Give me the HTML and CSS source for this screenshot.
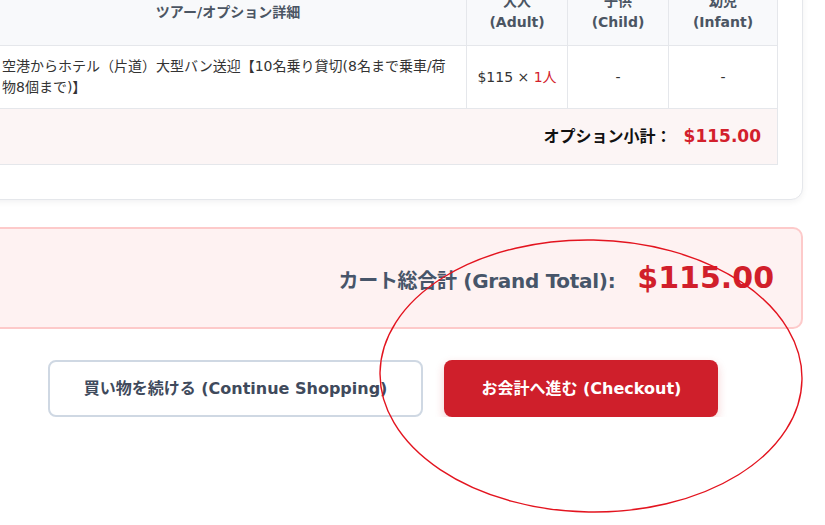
FILE: index.html
```html
<!DOCTYPE html>
<html lang="ja">
<head>
<meta charset="utf-8">
<title>カート</title>
<link rel="stylesheet" href="styles.css">
</head>
<body>
<main class="page">
  <section class="card">
    <table class="cart-table">
      <colgroup>
        <col class="col-detail">
        <col class="col-adult">
        <col class="col-child">
        <col class="col-infant">
      </colgroup>
      <thead>
        <tr>
          <th>ツアー/オプション詳細</th>
          <th>大人<br>(Adult)</th>
          <th>子供<br>(Child)</th>
          <th>幼児<br>(Infant)</th>
        </tr>
      </thead>
      <tbody>
        <tr>
          <td class="detail">空港からホテル（片道）大型バン送迎【10名乗り貸切(8名まで乗車/荷物8個まで)】</td>
          <td class="qty">$115 × <span class="count">1人</span></td>
          <td class="qty">-</td>
          <td class="qty">-</td>
        </tr>
        <tr class="subtotal-row">
          <td colspan="4"><span class="subtotal-label">オプション小計：</span><span class="subtotal-price">$115.00</span></td>
        </tr>
      </tbody>
    </table>
  </section>

  <section class="grand-total">
    <span class="grand-label">カート総合計 (Grand Total):</span>
    <span class="grand-price">$115.00</span>
  </section>

  <div class="actions">
    <button class="btn btn-secondary" type="button">買い物を続ける (Continue Shopping)</button>
    <button class="btn btn-primary" type="button">お会計へ進む (Checkout)</button>
  </div>
</main>

<svg class="annotation" width="825" height="525" viewBox="0 0 825 525" aria-hidden="true">
  <ellipse cx="591" cy="376" rx="211" ry="136" fill="none" stroke="#e3141f" stroke-width="1.4" transform="rotate(1 591 376)"/>
</svg>
</body>
</html>
```

FILE: styles.css
```css
html, body {
  margin: 0;
  padding: 0;
  background: #ffffff;
}

body {
  font-family: "DejaVu Sans", "Noto Sans CJK JP", sans-serif;
  color: #333333;
  overflow: hidden;
}

.page {
  width: 840px;
  margin: -47px 0 0 -37px;
}

.card {
  background: #ffffff;
  border: 1px solid #e5e7eb;
  border-radius: 12px;
  padding: 24px 25px 34px;
  box-shadow: 0 2px 6px rgba(15, 23, 42, 0.06);
}

.cart-table {
  width: 788px;
  table-layout: fixed;
  border-collapse: collapse;
  font-size: 14px;
  line-height: 21px;
}

.col-detail { width: 477px; }
.col-adult { width: 101px; }
.col-child { width: 101px; }
.col-infant { width: 109px; }

.cart-table th,
.cart-table td {
  border: 1px solid #e5e7eb;
}

.cart-table th {
  background: #f8f9fb;
  color: #4b5563;
  font-weight: bold;
  padding: 12px;
  text-align: center;
  vertical-align: middle;
}

.cart-table td {
  padding: 10px 12px;
  vertical-align: middle;
}

.detail {
  text-align: left;
  color: #333333;
}

.cart-table td.qty {
  text-align: center;
  color: #333333;
  padding: 10px 4px;
  white-space: nowrap;
}

.count {
  color: #d3202c;
}

.subtotal-row td {
  background: #fcf5f5;
  text-align: right;
  padding: 15px 16px;
  line-height: 24px;
}

.subtotal-label {
  font-size: 16px;
  font-weight: bold;
  color: #111111;
}

.subtotal-price {
  font-size: 17px;
  font-weight: bold;
  color: #d3202c;
  margin-left: 12px;
}

.grand-total {
  margin-top: 27px;
  background: #fef2f2;
  border: 2px solid #fdcaca;
  border-radius: 10px;
  padding: 29px 27px 26px;
  display: flex;
  justify-content: flex-end;
  align-items: baseline;
  gap: 22px;
  line-height: 39px;
}

.grand-label {
  font-size: 20px;
  font-weight: bold;
  color: #475569;
  letter-spacing: -0.3px;
}

.grand-price {
  font-size: 30px;
  font-weight: bold;
  color: #d11f2b;
}

.actions {
  margin-top: 31px;
  display: flex;
  justify-content: center;
  gap: 21px;
}

.btn {
  font-family: "DejaVu Sans", "Noto Sans CJK JP", sans-serif;
  font-size: 16px;
  font-weight: bold;
  line-height: 25px;
  border-radius: 8px;
  cursor: pointer;
}

.btn-secondary {
  background: #ffffff;
  color: #3f4a5c;
  border: 2px solid #cfd8e3;
  padding: 14px 34px;
}

.btn-primary {
  background: #cf1f2b;
  color: #ffffff;
  border: none;
  padding: 16px 37px;
  box-shadow: 0 4px 10px rgba(207, 31, 43, 0.22);
}

.annotation {
  position: absolute;
  top: 0;
  left: 0;
  pointer-events: none;
}
```
